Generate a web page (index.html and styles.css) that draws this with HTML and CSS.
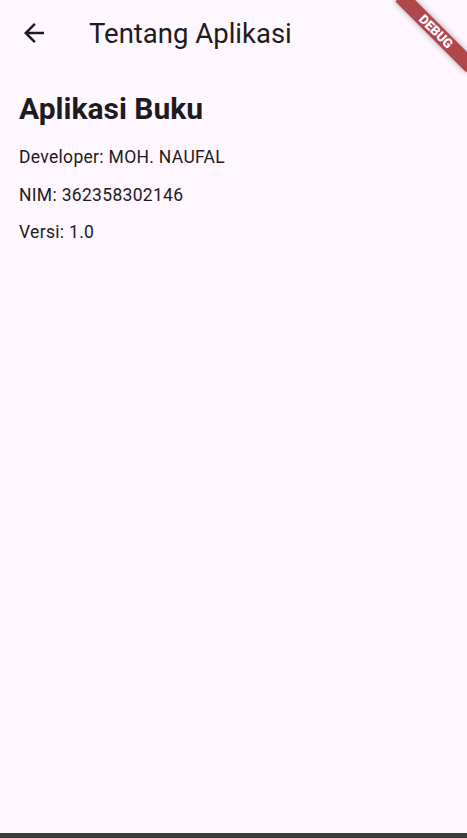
FILE: index.html
```html
<!DOCTYPE html>
<html>
<head>
<meta charset="utf-8">
<link rel="stylesheet" href="styles.css">
</head>
<body>
<div class="app">
  <header class="appbar">
    <button class="back" aria-label="Back">
      <svg width="30" height="30" viewBox="0 0 24 24"><path d="M20 11H7.83l5.59-5.59L12 4l-8 8 8 8 1.41-1.41L7.83 13H20v-2z" fill="#1d1b20"/></svg>
    </button>
    <h1 class="title">Tentang Aplikasi</h1>
  </header>
  <main class="content">
    <h2 class="heading">Aplikasi Buku</h2>
    <p class="line">Developer: MOH. NAUFAL</p>
    <p class="line">NIM: 362358302146</p>
    <p class="line">Versi: 1.0</p>
  </main>
  <div class="navbar"></div>
  <div class="debug"><span>DEBUG</span></div>
</div>
</body>
</html>
```
FILE: styles.css
```css
html, body {
  margin: 0;
  padding: 0;
}
body {
  background: #fef7ff;
  font-family: Roboto, "Noto Sans", sans-serif;
  color: #1d1b20;
}
.app {
  position: relative;
  width: 467px;
  height: 838px;
  overflow: hidden;
  display: flex;
  flex-direction: column;
}
.appbar {
  height: 66px;
  display: flex;
  align-items: center;
  flex: none;
}
.back {
  width: 68px;
  height: 60px;
  border: none;
  background: none;
  padding: 0;
  display: flex;
  align-items: center;
  justify-content: center;
  cursor: pointer;
}
.title {
  margin: 0 0 0 21px;
  font-size: 27.5px;
  font-weight: 400;
  line-height: 35px;
  color: #1d1b20;
}
.content {
  flex: 1;
  padding: 23px 19px 0;
}
.heading {
  margin: 0 0 16px;
  font-size: 30px;
  font-weight: 700;
  line-height: 40px;
}
.line {
  margin: 0 0 12.5px;
  font-size: 17.5px;
  line-height: 25px;
  letter-spacing: 0.31px;
  color: #1d1b20;
}
.navbar {
  height: 5px;
  background: #3c3c3c;
  flex: none;
}
.debug {
  position: absolute;
  top: 0;
  right: 0;
  width: 100px;
  height: 100px;
  overflow: hidden;
}
.debug span {
  position: absolute;
  left: 18.5px;
  top: 24px;
  width: 100px;
  height: 15px;
  transform: rotate(45deg);
  background: #b2474b;
  color: #fff;
  font-family: Roboto, sans-serif;
  font-weight: 900;
  font-size: 13px;
  line-height: 15px;
  text-align: center;
  box-shadow: 0 0 6px rgba(0,0,0,0.35);
}
```
